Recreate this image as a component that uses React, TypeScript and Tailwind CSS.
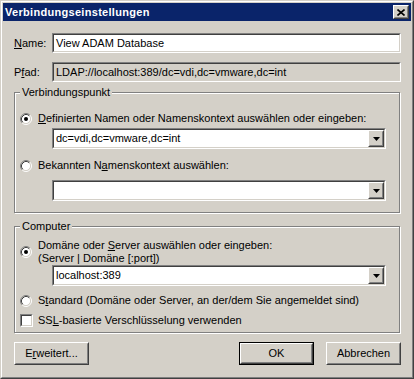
const sunkenOuter = 'border border-t-[#808080] border-l-[#808080] border-b-white border-r-white';
const sunkenInner = 'border border-t-[#404040] border-l-[#404040] border-b-[#d4d0c8] border-r-[#d4d0c8]';
const raisedOuter = 'border border-t-white border-l-white border-b-[#404040] border-r-[#404040]';
const raisedInner = 'border border-t-[#d4d0c8] border-l-[#d4d0c8] border-b-[#808080] border-r-[#808080]';

function Radio({ checked }: { checked?: boolean }) {
  return (
    <svg width="12" height="12" viewBox="0 0 12 12" className="shrink-0">
      <circle cx="6" cy="6" r="4.5" fill="#fff" />
      <path d="M2.11 9.89A5.5 5.5 0 0 1 9.89 2.11" fill="none" stroke="#808080" />
      <path d="M9.89 2.11A5.5 5.5 0 0 1 2.11 9.89" fill="none" stroke="#fff" />
      <path d="M2.82 9.18A4.5 4.5 0 0 1 9.18 2.82" fill="none" stroke="#404040" />
      <path d="M9.18 2.82A4.5 4.5 0 0 1 2.82 9.18" fill="none" stroke="#d4d0c8" />
      {checked && <circle cx="6" cy="6" r="2" fill="#000" />}
    </svg>
  );
}

function Checkbox() {
  return (
    <div className={`h-[13px] w-[13px] shrink-0 ${sunkenOuter}`}>
      <div className={`h-full w-full bg-white ${sunkenInner}`} />
    </div>
  );
}

function Edit({ value, readOnly }: { value: string; readOnly?: boolean }) {
  return (
    <div className={`h-[20px] flex-1 ${sunkenOuter}`}>
      <div className={`flex h-full items-center px-[2px] ${readOnly ? 'bg-[#d4d0c8]' : 'bg-white'} ${sunkenInner}`}>
        <span className="whitespace-nowrap">{value}</span>
      </div>
    </div>
  );
}

function Combo({ value }: { value: string }) {
  return (
    <div className={`ml-[32px] h-[21px] w-[334px] ${sunkenOuter}`}>
      <div className={`flex h-full items-center bg-white ${sunkenInner}`}>
        <span className="flex-1 whitespace-nowrap pl-[2px]">{value}</span>
        <div className={`h-[17px] w-[16px] ${raisedOuter}`}>
          <div className={`flex h-full w-full items-center justify-center bg-[#d4d0c8] ${raisedInner}`}>
            <svg width="7" height="4" viewBox="0 0 7 4">
              <polygon points="0,0 7,0 3.5,4" fill="#000" />
            </svg>
          </div>
        </div>
      </div>
    </div>
  );
}

function Group({ title, className, children }: { title: string; className: string; children: React.ReactNode }) {
  return (
    <div
      className={`relative w-[386px] border border-[#808080] shadow-[inset_1px_1px_0_#fff,1px_1px_0_#fff] flex flex-col pl-[5px] ${className}`}
    >
      <span className="absolute left-[5px] top-[-7px] bg-[#d4d0c8] px-[2px]">{title}</span>
      {children}
    </div>
  );
}

function Button({ children, isDefault, className = '' }: { children: React.ReactNode; isDefault?: boolean; className?: string }) {
  const face = (
    <div className={`h-full w-full ${raisedOuter}`}>
      <div className={`flex h-full w-full items-center justify-center ${raisedInner}`}>{children}</div>
    </div>
  );
  return (
    <div className={`h-[23px] w-[75px] ${className}`}>
      {isDefault ? <div className="h-full w-full border border-black">{face}</div> : face}
    </div>
  );
}

export default function App() {
  return (
    <div className="h-[379px] w-[414px] border border-t-[#d4d0c8] border-l-[#d4d0c8] border-b-[#404040] border-r-[#404040] bg-[#d4d0c8] font-['Liberation_Sans',Arial,sans-serif] text-[11px] leading-[13px] text-black">
      <div className="flex h-full flex-col border border-t-white border-l-white border-b-[#808080] border-r-[#808080] p-px">
        <div className="flex h-[18px] items-center bg-[#0a246a] px-[2px]">
          <span className="flex-1 font-bold tracking-[0.3px] text-white">Verbindungseinstellungen</span>
          <div className={`h-[14px] w-[16px] ${raisedOuter}`}>
            <div className={`flex h-full w-full items-center justify-center bg-[#d4d0c8] ${raisedInner}`}>
              <svg width="8" height="7" viewBox="0 0 8 7">
                <path d="M0.5 0.5L7.5 6.5M7.5 0.5L0.5 6.5" stroke="#000" strokeWidth="1.6" fill="none" />
              </svg>
            </div>
          </div>
        </div>

        <div className="flex flex-col pl-[11px] pr-[10px] pt-[12px]">
          <div className="flex items-center">
            <span className="w-[38px]">
              <u>N</u>ame:
            </span>
            <Edit value="View ADAM Database" />
          </div>
          <div className="mt-[9px] flex items-center">
            <span className="w-[38px]">
              P<u>f</u>ad:
            </span>
            <Edit value="LDAP://localhost:389/dc=vdi,dc=vmware,dc=int" readOnly />
          </div>

          <Group title="Verbindungspunkt" className="mt-[10px] pt-[19px] pb-[11px]">
            <div className="flex h-[13px] items-center">
              <Radio checked />
              <span className="ml-[6px] whitespace-nowrap">
                <u>D</u>efinierten Namen oder Namenskontext auswählen oder eingeben:
              </span>
            </div>
            <div className="mt-[3px]">
              <Combo value="dc=vdi,dc=vmware,dc=int" />
            </div>
            <div className="mt-[10px] flex h-[13px] items-center">
              <Radio />
              <span className="ml-[6px] whitespace-nowrap">
                Bekannten N<u>a</u>menskontext auswählen:
              </span>
            </div>
            <div className="mt-[8px]">
              <Combo value="" />
            </div>
          </Group>

          <Group title="Computer" className="mt-[13px] pt-[12px] pb-[5px]">
            <div className="flex h-[26px] items-center">
              <Radio checked />
              <div className="ml-[6px] flex flex-col whitespace-nowrap">
                <span>
                  Domäne oder <u>S</u>erver auswählen oder eingeben:
                </span>
                <span>(Server | Domäne [:port])</span>
              </div>
            </div>
            <Combo value="localhost:389" />
            <div className="mt-[8px] flex h-[13px] items-center">
              <Radio />
              <span className="ml-[6px] whitespace-nowrap">
                S<u>t</u>andard (Domäne oder Server, an der/dem Sie angemeldet sind)
              </span>
            </div>
            <div className="mt-[7px] flex h-[13px] items-center">
              <Checkbox />
              <span className="ml-[5px] whitespace-nowrap">
                SS<u>L</u>-basierte Verschlüsselung verwenden
              </span>
            </div>
          </Group>

          <div className="mt-[9px] flex">
            <Button>
              E<u>r</u>weitert...
            </Button>
            <div className="flex-1" />
            <Button isDefault>OK</Button>
            <Button className="ml-[12px]">Abbrechen</Button>
          </div>
        </div>
      </div>
    </div>
  );
}
